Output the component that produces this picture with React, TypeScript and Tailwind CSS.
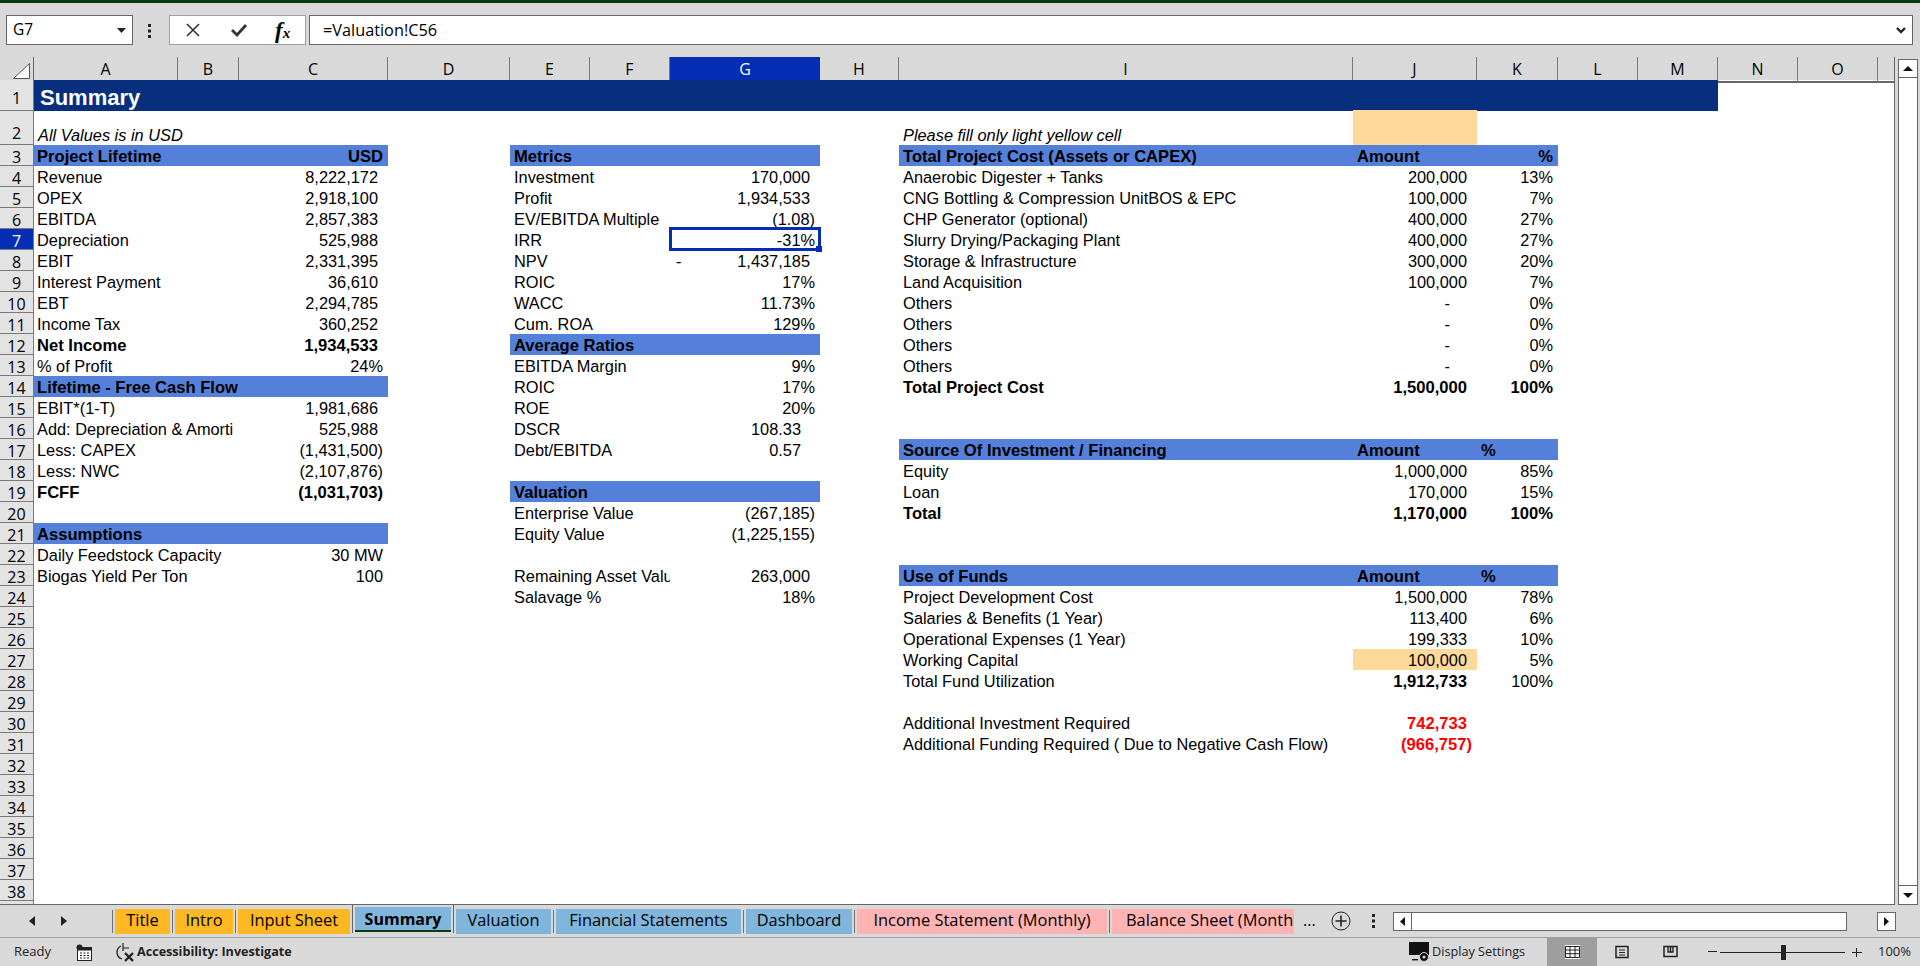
import React from "react";

const COLS =
  "grid grid-cols-[34px_144px_61px_149px_122px_80px_80px_150px_79px_454px_124px_81px_80px_80px_80px_80px_16px]";
const UI = "font-['Open_Sans',sans-serif]";
const BOLD = "font-bold text-[16.6px] pt-[3px]";
const HEAD = "bg-[#5480da] font-bold text-[16.6px] pt-[3px]";

type V = { t: string; pr?: string; b?: boolean; red?: boolean; left?: boolean; lead?: boolean };
type RowData = {
  n: number;
  a?: string; aB?: boolean; aH?: boolean; c?: V;
  e?: string; eH?: boolean; g?: V;
  i?: string; iB?: boolean; iH?: boolean; j?: V; k?: V;
};

const N = "pr-[10px]";
const P = "pr-[5px]";
const val = (t: string, b = false): V => ({ t, pr: N, b });
const par = (t: string, b = false): V => ({ t, pr: P, b });
const dash: V = { t: "-", pr: "pr-[27px]" };

const rows: RowData[] = [
  { n: 3, a: "Project Lifetime", aH: true, c: par("USD", true), e: "Metrics", eH: true, i: "Total Project Cost (Assets or CAPEX)", iH: true, j: { t: "Amount", b: true, left: true }, k: par("%", true) },
  { n: 4, a: "Revenue", c: val("8,222,172"), e: "Investment", g: val("170,000"), i: "Anaerobic Digester + Tanks", j: val("200,000"), k: par("13%") },
  { n: 5, a: "OPEX", c: val("2,918,100"), e: "Profit", g: val("1,934,533"), i: "CNG Bottling & Compression UnitBOS & EPC", j: val("100,000"), k: par("7%") },
  { n: 6, a: "EBITDA", c: val("2,857,383"), e: "EV/EBITDA Multiple", g: par("(1.08)"), i: "CHP Generator (optional)", j: val("400,000"), k: par("27%") },
  { n: 7, a: "Depreciation", c: val("525,988"), e: "IRR", g: par("-31%"), i: "Slurry Drying/Packaging Plant", j: val("400,000"), k: par("27%") },
  { n: 8, a: "EBIT", c: val("2,331,395"), e: "NPV", g: { t: "1,437,185", pr: N, lead: true }, i: "Storage & Infrastructure", j: val("300,000"), k: par("20%") },
  { n: 9, a: "Interest Payment", c: val("36,610"), e: "ROIC", g: par("17%"), i: "Land Acquisition", j: val("100,000"), k: par("7%") },
  { n: 10, a: "EBT", c: val("2,294,785"), e: "WACC", g: par("11.73%"), i: "Others", j: dash, k: par("0%") },
  { n: 11, a: "Income Tax", c: val("360,252"), e: "Cum. ROA", g: par("129%"), i: "Others", j: dash, k: par("0%") },
  { n: 12, a: "Net Income", aB: true, c: val("1,934,533", true), e: "Average Ratios", eH: true, i: "Others", j: dash, k: par("0%") },
  { n: 13, a: "% of Profit", c: par("24%"), e: "EBITDA Margin", g: par("9%"), i: "Others", j: dash, k: par("0%") },
  { n: 14, a: "Lifetime - Free Cash Flow", aH: true, e: "ROIC", g: par("17%"), i: "Total Project Cost", iB: true, j: val("1,500,000", true), k: par("100%", true) },
  { n: 15, a: "EBIT*(1-T)", c: val("1,981,686"), e: "ROE", g: par("20%") },
  { n: 16, a: "Add: Depreciation & Amorti", c: val("525,988"), e: "DSCR", g: { t: "108.33", pr: "pr-[19px]" } },
  { n: 17, a: "Less: CAPEX", c: par("(1,431,500)"), e: "Debt/EBITDA", g: { t: "0.57", pr: "pr-[19px]" }, i: "Source Of Investment / Financing", iH: true, j: { t: "Amount", b: true, left: true }, k: { t: "%", b: true, left: true } },
  { n: 18, a: "Less: NWC", c: par("(2,107,876)"), i: "Equity", j: val("1,000,000"), k: par("85%") },
  { n: 19, a: "FCFF", aB: true, c: par("(1,031,703)", true), e: "Valuation", eH: true, i: "Loan", j: val("170,000"), k: par("15%") },
  { n: 20, e: "Enterprise Value", g: par("(267,185)"), i: "Total", iB: true, j: val("1,170,000", true), k: par("100%", true) },
  { n: 21, a: "Assumptions", aH: true, e: "Equity Value", g: par("(1,225,155)") },
  { n: 22, a: "Daily Feedstock Capacity", c: par("30 MW") },
  { n: 23, a: "Biogas Yield Per Ton", c: par("100"), e: "Remaining Asset Valu", g: val("263,000"), i: "Use of Funds", iH: true, j: { t: "Amount", b: true, left: true }, k: { t: "%", b: true, left: true } },
  { n: 24, e: "Salavage %", g: par("18%"), i: "Project Development Cost", j: val("1,500,000"), k: par("78%") },
  { n: 25, i: "Salaries & Benefits (1 Year)", j: val("113,400"), k: par("6%") },
  { n: 26, i: "Operational Expenses (1 Year)", j: val("199,333"), k: par("10%") },
  { n: 27, i: "Working Capital", j: val("100,000"), k: par("5%") },
  { n: 28, i: "Total Fund Utilization", j: val("1,912,733", true), k: par("100%") },
  { n: 29 },
  { n: 30, i: "Additional Investment Required", j: { t: "742,733", pr: N, b: true, red: true } },
  { n: 31, i: "Additional Funding Required ( Due to Negative Cash Flow)", j: { t: "(966,757)", pr: P, b: true, red: true } },
  { n: 32 }, { n: 33 }, { n: 34 }, { n: 35 }, { n: 36 }, { n: 37 }, { n: 38 },
];

const letters = ["A", "B", "C", "D", "E", "F", "G", "H", "I", "J", "K", "L", "M", "N", "O"];

function RowHead({ n, active, pad = "pt-[4px]" }: { n: number | string; active?: boolean; pad?: string }) {
  return (
    <div
      className={`${UI} ${pad} flex items-center justify-center border-r border-b border-[#7a7a7a] text-[16px] leading-[18px] ${
        active ? "bg-[#032db4] text-white" : "bg-[#e3e3e3] text-black"
      }`}
    >
      {n}
    </div>
  );
}

function Value({ v, col, head, orange, sel }: { v?: V; col: string; head?: boolean; orange?: boolean; sel?: boolean }) {
  return (
    <div
      className={`${col} relative flex min-w-0 whitespace-nowrap ${v?.b ? BOLD : "pt-[2px]"} ${head ? "bg-[#5480da]" : ""} ${orange ? "bg-[#ffd999]" : ""} ${
        v?.left ? "justify-start pl-[4px]" : v?.lead ? `justify-between pl-[6px] ${v?.pr ?? ""}` : `justify-end ${v?.pr ?? ""}`
      } ${v?.red ? "text-[#ff0000]" : ""}`}
    >
      {v?.lead && <span>-</span>}
      <span>{v?.t}</span>
      {sel && (
        <div className="absolute -top-[2px] -left-[1px] -right-[1px] -bottom-[1px] border-[3px] border-[#032db4]">
          <div className="absolute -right-[4px] -bottom-[4px] h-[6px] w-[6px] bg-[#032db4]" />
        </div>
      )}
    </div>
  );
}

function SheetRow({ r }: { r: RowData }) {
  return (
    <div className={`${COLS} h-[21px] grid-rows-[21px] leading-[18px]`}>
      <RowHead n={r.n} active={r.n === 7} />
      <div className={`col-start-2 col-span-2 min-w-0 overflow-hidden whitespace-nowrap pl-[3px] ${r.aH ? HEAD : r.aB ? BOLD : "pt-[2px]"}`}>
        {r.a}
      </div>
      <Value col="col-start-4" v={r.c} head={r.aH} />
      <div className={`col-start-6 col-span-2 min-w-0 overflow-hidden whitespace-nowrap pl-[4px] ${r.eH ? HEAD : "pt-[2px]"}`}>
        {r.e}
      </div>
      <Value col="col-start-8" v={r.g} head={r.eH} sel={r.n === 7} />
      <div className={`col-start-10 min-w-0 whitespace-nowrap pl-[4px] ${r.iH ? HEAD : r.iB ? BOLD : "pt-[2px]"}`}>
        {r.i}
      </div>
      <Value col="col-start-11" v={r.j} head={r.iH} orange={r.n === 27} />
      <Value col="col-start-12" v={r.k} head={r.iH} />
    </div>
  );
}

const tabs = [
  { t: "Title", w: "w-[55px]", bg: "bg-[#ffb722]" },
  { t: "Intro", w: "w-[58px]", bg: "bg-[#ffb722]" },
  { t: "Input Sheet", w: "w-[112px]", bg: "bg-[#ffb722]" },
];
const tabs2 = [
  { t: "Valuation", w: "w-[95px]", bg: "bg-[#80b5dc]" },
  { t: "Financial Statements", w: "w-[185px]", bg: "bg-[#80b5dc]" },
  { t: "Dashboard", w: "w-[106px]", bg: "bg-[#80b5dc]" },
  { t: "Income Statement (Monthly)", w: "w-[250px]", bg: "bg-[#ffb3b3]" },
];

function Tab({ t, w, bg }: { t: string; w: string; bg: string }) {
  return (
    <div className={`${w} ${bg} flex h-[25px] shrink-0 items-center justify-center whitespace-nowrap pb-[1px] text-[16.4px] text-black`}>{t}</div>
  );
}
const TabSep = () => <div className="mx-[2px] h-[23px] w-[1px] shrink-0 bg-[#707070]" />;

export default function App() {
  return (
    <div className="flex h-[966px] w-[1920px] flex-col overflow-hidden bg-[#d9d9d9] text-black">
      <div className="h-[3px] shrink-0 bg-[#0b3a14]" />

      {/* formula bar */}
      <div className={`${UI} flex h-[54px] shrink-0 items-start pt-[12px] text-[15.5px]`}>
        <div className="ml-[6px] flex h-[30px] w-[127px] items-center justify-between border border-[#666] bg-white pl-[6px] pr-[6px]">
          <span>G7</span>
          <svg width="9" height="5" viewBox="0 0 9 5"><path d="M0 0h9L4.5 5z" fill="#222" /></svg>
        </div>
        <svg className="ml-[14px] mt-[9px]" width="6" height="14" viewBox="0 0 6 14" fill="#222">
          <rect x="1" y="0" width="3" height="3" /><rect x="1" y="5.5" width="3" height="3" /><rect x="1" y="11" width="3" height="3" />
        </svg>
        <div className="ml-[16px] flex h-[30px] w-[137px] items-center border border-[#a0a0a0] bg-white pl-[16px]">
          <svg width="14" height="14" viewBox="0 0 14 14" fill="none" stroke="#333" strokeWidth="1.6"><path d="M1 1l12 12M13 1L1 13" /></svg>
          <svg className="ml-[31px]" width="16" height="14" viewBox="0 0 16 14" fill="none" stroke="#333" strokeWidth="2.8"><path d="M1 7l5 5L15 2" /></svg>
          <span className="ml-[28px] font-['Liberation_Serif',serif] text-[23px] font-bold italic leading-none">f<span className="text-[15px]">x</span></span>
        </div>
        <div className="ml-[3px] flex h-[30px] w-[1604px] items-center justify-between border border-[#666] bg-white pl-[13px] pr-[6px] text-[16.3px]">
          <span>=Valuation!C56</span>
          <svg width="10" height="7" viewBox="0 0 10 7" fill="none" stroke="#222" strokeWidth="2.4"><path d="M1 1l4 4 4-4" /></svg>
        </div>
      </div>

      {/* sheet + vertical scrollbar */}
      <div className="flex h-[848px] shrink-0">
        <div className="w-[1894px] shrink-0 bg-white font-['Liberation_Sans',sans-serif] text-[16.35px]">
          {/* column headers */}
          <div className={`${COLS} ${UI} h-[23px] bg-[#d9d9d9] text-center text-[16px] leading-[24px]`}>
            <div className="flex items-end justify-end border-r border-b-2 border-[#666] pb-[2px] pr-[3px]">
              <svg width="17" height="16" viewBox="0 0 17 16"><path d="M0.5 15.5H16.5V0.5Z" fill="#fff" stroke="#555" /></svg>
            </div>
            {letters.map((l) => (
              <div
                key={l}
                className={l === "G" ? "border-b-2 border-[#032db4] bg-[#032db4] text-white" : "border-r border-b-2 border-r-[#777] border-b-[#666]"}
              >
                {l}
              </div>
            ))}
            <div className="border-b-2 border-[#666]" />
          </div>

          {/* row 1 */}
          <div className={`${COLS} h-[31px] grid-rows-[31px]`}>
            <RowHead n={1} pad="pt-[5px]" />
            <div className="col-start-2 col-span-13 bg-[#082f7e] pl-[6px] pt-[4px] text-[22px] font-bold leading-[27px] text-white">Summary</div>
          </div>
          {/* row 2 */}
          <div className={`${COLS} h-[34px] grid-rows-[34px] italic`}>
            <div className={`${UI} flex items-end justify-center border-r border-b border-[#7a7a7a] bg-[#e3e3e3] text-[16px] not-italic leading-[22px]`}>2</div>
            <div className="col-start-2 col-span-3 self-end whitespace-nowrap pl-[4px] leading-[20px]">All Values is in USD</div>
            <div className="col-start-10 self-end whitespace-nowrap pl-[4px] leading-[20px]">Please fill only light yellow cell</div>
            <div className="col-start-11 -mt-[1px] bg-[#ffd999]" />
          </div>

          {rows.map((r) => (
            <SheetRow key={r.n} r={r} />
          ))}

          {/* clipped row 39 */}
          <div className={`${COLS} h-[4px] border-b border-[#666]`}>
            <div className="border-r border-[#7a7a7a] bg-[#e3e3e3]" />
          </div>
        </div>

        {/* vertical scrollbar */}
        <div className="flex w-[26px] shrink-0 flex-col border-l border-[#666] pl-[3px] pr-[2px] pt-[2px]">
          <div className="flex h-[19px] items-center justify-center border border-[#666] bg-white">
            <svg width="10" height="5" viewBox="0 0 10 5"><path d="M0 5h10L5 0z" fill="#111" /></svg>
          </div>
          <div className="flex-1 border-x border-[#666] bg-white" />
          <div className="flex h-[20px] items-center justify-center border border-[#666] bg-white">
            <svg width="10" height="5" viewBox="0 0 10 5"><path d="M0 0h10L5 5z" fill="#111" /></svg>
          </div>
        </div>
      </div>

      {/* sheet tabs */}
      <div className={`${UI} flex h-[32px] shrink-0 items-start`}>
        <div className="flex h-[31px] w-[112px] shrink-0 items-center pl-[29px]">
          <svg width="6" height="10" viewBox="0 0 6 10"><path d="M6 0v10L0 5z" fill="#222" /></svg>
          <svg className="ml-[26px]" width="6" height="10" viewBox="0 0 6 10"><path d="M0 0v10l6-5z" fill="#222" /></svg>
        </div>
        <div className="flex h-[32px] items-center">
          <div className="h-[23px] w-[1px] bg-[#707070]" />
          <div className="w-[2px]" />
          <Tab {...tabs[0]} />
          <TabSep />
          <Tab {...tabs[1]} />
          <TabSep />
          <Tab {...tabs[2]} />
          <div className="w-[2px]" />
          <div className="flex h-[28px] w-[102px] shrink-0 flex-col self-start border-x border-[#666] px-[2px] pt-[2px]">
            <div className="flex h-[23px] items-center justify-center bg-[#80b5dc] text-[16px] font-bold">Summary</div>
            <div className="h-[2px] bg-[#0b3a14]" />
          </div>
          <div className="w-[2px]" />
          <Tab {...tabs2[0]} />
          <TabSep />
          <Tab {...tabs2[1]} />
          <TabSep />
          <Tab {...tabs2[2]} />
          <TabSep />
          <Tab {...tabs2[3]} />
          <TabSep />
          <div className="flex h-[25px] w-[182px] shrink-0 items-center overflow-hidden whitespace-nowrap bg-[#ffb3b3] pb-[1px] pl-[14px] text-[16.4px]">Balance Sheet (Month</div>
        </div>
        <span className="ml-[9px] mt-[3px] w-[14px] text-[16px]">...</span>
        <svg className="ml-[14px] mt-[6px] shrink-0" width="20" height="20" viewBox="0 0 20 20" fill="none" stroke="#222" strokeWidth="1">
          <circle cx="10" cy="10" r="9" />
          <path d="M10 4.5v11M4.5 10h11" strokeWidth="1.6" />
        </svg>
        <svg className="ml-[20px] mt-[9px] shrink-0" width="5" height="14" viewBox="0 0 5 14" fill="#222">
          <rect width="3" height="3" x="1" /><rect width="3" height="3" x="1" y="5.5" /><rect width="3" height="3" x="1" y="11" />
        </svg>
        <div className="ml-[17px] mt-[7px] flex h-[19px] w-[454px] shrink-0 border border-[#666] bg-white">
          <div className="flex w-[18px] items-center justify-center border-r border-[#666]">
            <svg width="5" height="9" viewBox="0 0 5 9"><path d="M5 0v9L0 4.5z" fill="#111" /></svg>
          </div>
        </div>
        <div className="ml-[30px] mt-[7px] flex h-[19px] w-[19px] shrink-0 items-center justify-center border border-[#666] bg-white">
          <svg width="5" height="9" viewBox="0 0 5 9"><path d="M0 0v9l5-4.5z" fill="#111" /></svg>
        </div>
      </div>

      {/* status bar */}
      <div className={`${UI} flex h-[29px] shrink-0 items-center border-t border-[#a0a0a0] text-[13px] text-[#222]`}>
        <span className="ml-[14px] w-[36px]">Ready</span>
        <svg className="ml-[26px] shrink-0" width="16" height="17" viewBox="0 0 16 17" fill="none">
          <circle cx="3.5" cy="3.5" r="3" fill="#222" />
          <rect x="1.5" y="3.5" width="14" height="13" fill="#fff" stroke="#222" />
          <rect x="1.5" y="3.5" width="14" height="3" fill="#222" />
          <path d="M4 9h2M7.5 9h2M11 9h2M4 11.5h2M7.5 11.5h2M11 11.5h2M4 14h2M7.5 14h2M11 14h2" stroke="#222" />
        </svg>
        <svg className="ml-[23px] shrink-0" width="20" height="20" viewBox="0 0 20 20" fill="none" stroke="#222">
          <path d="M6 4a7 7 0 0 0 1 13" strokeWidth="1.3" />
          <path d="M8 1v8M8 6h6" strokeWidth="1.2" />
          <path d="M10 11l8 8M18 11l-8 8" strokeWidth="2.4" />
        </svg>
        <span className="ml-[2px] w-[152px] shrink-0 whitespace-nowrap text-[12.6px] font-bold">Accessibility: Investigate</span>
        <div className="ml-[1120px] flex items-center">
          <svg width="22" height="22" viewBox="0 0 22 22">
            <path d="M0 1h20v13H0z" fill="#111" />
            <path d="M3 18h6v1.4H3z" fill="#111" />
            <circle cx="15" cy="16" r="4.5" fill="#111" stroke="#d9d9d9" />
            <circle cx="15" cy="16" r="1.5" fill="#d9d9d9" />
          </svg>
          <span className="ml-[1px] w-[115px] whitespace-nowrap text-[12.7px]">Display Settings</span>
        </div>
        <div className="flex h-full w-[50px] shrink-0 items-center justify-center bg-[#9e9e9e]">
          <svg className="bg-white" width="15" height="14" viewBox="0 0 15 14" fill="none" stroke="#222">
            <path d="M0.5 1.5h14v11h-14zM0.5 5h14M0.5 8.7h14M5 1.5v11M10 1.5v11" />
          </svg>
        </div>
        <svg className="ml-[18px] shrink-0" width="15" height="14" viewBox="0 0 15 14" fill="none" stroke="#222">
          <path d="M1 1.5h12v11H1z" strokeWidth="1.5" /><path d="M4 5h6M4 7.5h6M4 10h6" />
        </svg>
        <svg className="ml-[33px] shrink-0" width="15" height="14" viewBox="0 0 15 14" fill="none" stroke="#222">
          <path d="M1 1.5h13v10H1z" strokeWidth="1.5" /><path d="M5 1.5v5.5h5V1.5M7.5 1.5v5.5" strokeWidth="1.4" />
        </svg>
        <span className="ml-[30px] mb-[1px] h-[1px] w-[9px] bg-[#222]" />
        <div className="relative ml-[3px] h-[1px] w-[125px] bg-[#222]">
          <div className="absolute -top-[7px] left-[61px] h-[15px] w-[5px] bg-[#222]" />
        </div>
        <span className="relative ml-[7px] h-[1px] w-[10px] bg-[#222]">
          <span className="absolute -top-[4px] left-[4px] h-[9px] w-[1px] bg-[#222]" />
        </span>
        <span className="ml-[16px] text-[13px]">100%</span>
      </div>
    </div>
  );
}
